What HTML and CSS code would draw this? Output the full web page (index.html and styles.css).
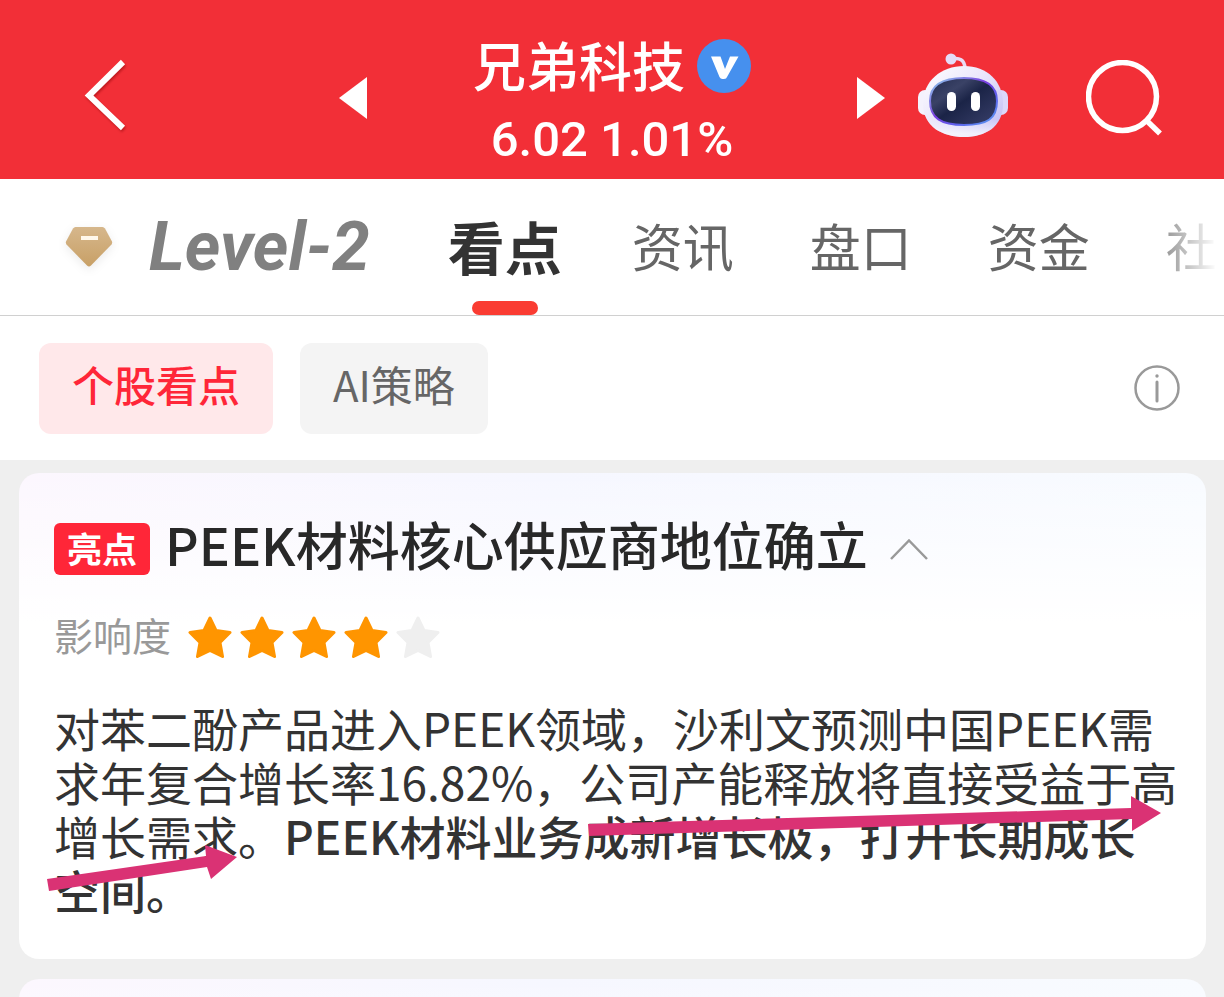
FILE: index.html
```html
<!DOCTYPE html>
<html lang="zh-CN">

<head>
    <meta charset="utf-8">
    <meta name="viewport" content="width=device-width, initial-scale=1.0">
    <title>兄弟科技</title>
    <link rel="stylesheet" href="styles.css">
</head>

<body>

    <header class="topbar">
        <div class="topbar-left">
            <button class="icon-btn back" aria-label="返回">
                <svg width="44" height="74" viewBox="0 0 44 74">
                    <path d="M39 4 L5 37.500 L39 70" fill="none" stroke="#fff" stroke-width="6" />
                </svg>
            </button>
            <button class="icon-btn" aria-label="上一只">
                <svg width="28" height="42" viewBox="0 0 28 42">
                    <path d="M0 21 L28 0 V42 Z" fill="#fff" />
                </svg>
            </button>
        </div>

        <div class="stock">
            <h1>兄弟科技
                <svg width="54" height="54" viewBox="0 0 54 54">
                    <circle cx="27" cy="27" r="27" fill="#4690ee" />
                    <path d="M14 17.500 H23.500 L28 30 L33 17.500 H41.500 L30 38 Q29.500 40 27 40 H25.500 Q23.500 40 22.500 38 Z" fill="#fff" />
                </svg>
            </h1>
            <p class="quote">6.02 1.01%</p>
        </div>

        <div class="topbar-right">
            <button class="icon-btn" aria-label="下一只">
                <svg width="28" height="42" viewBox="0 0 28 42">
                    <path d="M28 21 L0 0 V42 Z" fill="#fff" />
                </svg>
            </button>
            <button class="icon-btn robot" aria-label="AI助手">
                <svg width="92" height="86" viewBox="0 0 92 86">
                    <defs>
                        <linearGradient id="shell" x1="0" y1="0" x2="1" y2="1">
                            <stop offset="0" stop-color="#fff" />
                            <stop offset="0.45" stop-color="#eae6fb" />
                            <stop offset="1" stop-color="#bcb8f3" />
                        </linearGradient>
                        <linearGradient id="rim" x1="0" y1="0" x2="1" y2="1">
                            <stop offset="0" stop-color="#8ed5ea" />
                            <stop offset="0.45" stop-color="#7a3de0" />
                            <stop offset="0.7" stop-color="#5c62ec" />
                            <stop offset="1" stop-color="#5aa0f0" />
                        </linearGradient>
                        <linearGradient id="face" x1="0" y1="0" x2="1" y2="1">
                            <stop offset="0" stop-color="#232c50" />
                            <stop offset="0.3" stop-color="#3a4266" />
                            <stop offset="0.5" stop-color="#1b2447" />
                            <stop offset="1" stop-color="#39406b" />
                        </linearGradient>
                        <linearGradient id="chin" x1="0" y1="0" x2="0" y2="1">
                            <stop offset="0.75" stop-color="#fff" stop-opacity="0" />
                            <stop offset="0.95" stop-color="#fff" stop-opacity="0.7" />
                        </linearGradient>
                    </defs>
                    <path d="M34 6 Q47 3 48 15" fill="none" stroke="#e9dcf5" stroke-width="3.500" />
                    <circle cx="34" cy="6" r="5.500" fill="#e4dcf7" />
                    <rect x="1" y="37" width="14" height="25" rx="7" fill="#f4f2fd" />
                    <rect x="77" y="37" width="14" height="25" rx="7" fill="#dcd8fa" />
                    <path d="M47 13 C70 13 86 28 86 51 C86 74 68 84 47 84 C26 84 6 74 6 51 C6 28 24 13 47 13 Z" fill="url(#shell)" />
                    <path d="M47 13 C70 13 86 28 86 51 C86 74 68 84 47 84 C26 84 6 74 6 51 C6 28 24 13 47 13 Z" fill="url(#chin)" />
                    <path d="M47 25 C70 25 80 33 80 48 C80 66 70 72 47 72 C24 72 13 65 13 48 C13 32 25 25 47 25 Z" fill="url(#face)" stroke="url(#rim)" stroke-width="2" />
                    <rect x="30" y="39" width="9" height="19" rx="4.500" fill="#fff" />
                    <rect x="54" y="39" width="9" height="19" rx="4.500" fill="#fff" />
                </svg>
            </button>
            <button class="icon-btn" aria-label="搜索">
                <svg width="76" height="76" viewBox="0 0 76 76">
                    <circle cx="36.500" cy="36.500" r="34" fill="none" stroke="#fff" stroke-width="5.500" />
                    <path d="M60 60 L74 73.500" stroke="#fff" stroke-width="5.500" />
                </svg>
            </button>
        </div>
    </header>

    <nav class="tabs">
        <svg class="gem" width="48" height="44" viewBox="0 0 48 44">
            <defs>
                <linearGradient id="gold" x1="0" y1="0" x2="0" y2="1">
                    <stop offset="0" stop-color="#d6b78c" />
                    <stop offset="1" stop-color="#c8a066" />
                </linearGradient>
            </defs>
            <path d="M10.500 2 H37.500 Q39 2 40 3.500 L47 16.500 Q47.500 18 46.500 19.500 L26 40.500 Q24 42.500 22 40.500 L1.500 19.500 Q0.500 18 1 16.500 L8 3.500 Q9 2 10.500 2 Z" fill="url(#gold)" />
            <rect x="16" y="11" width="17" height="4" fill="#fff8ec" />
        </svg>
        <a href="#level2" class="level">Level-2</a>
        <a href="#kandian" class="active">看点</a>
        <a href="#zixun">资讯</a>
        <a href="#pankou">盘口</a>
        <a href="#zijin">资金</a>
        <a href="#she">社</a>
    </nav>

    <section class="filters">
        <button class="chip selected">个股看点</button>
        <button class="chip">AI策略</button>
        <button class="icon-btn info" aria-label="说明">
            <svg width="46" height="46" viewBox="0 0 46 46">
                <circle cx="23" cy="23" r="21.500" fill="none" stroke="#999" stroke-width="2.500" />
                <circle cx="23" cy="11" r="1.700" fill="#999" />
                <path d="M23 17 V36" stroke="#999" stroke-width="3" stroke-linecap="round" />
            </svg>
        </button>
    </section>

    <main>
        <article class="card">
            <div class="card-title">
                <span class="tag">亮点</span>
                <h2>PEEK材料核心供应商地位确立</h2>
                <button class="icon-btn" aria-label="收起">
                    <svg width="38" height="24" viewBox="0 0 38 24">
                        <path d="M1 22 L19 3.500 L37 22" fill="none" stroke="#999" stroke-width="2.500" />
                    </svg>
                </button>
            </div>

            <div class="impact">
                <span>影响度</span>
                <div class="stars" role="img" aria-label="4星">
                    <svg class="star on" viewBox="0 0 44 44"><path d="M22 3 L28 15.500 L42 17.500 L32 27.500 L34.500 41.500 L22 35.500 L9.500 41.500 L12 27.500 L2 17.500 L16 15.500 Z" /></svg>
                    <svg class="star on" viewBox="0 0 44 44"><path d="M22 3 L28 15.500 L42 17.500 L32 27.500 L34.500 41.500 L22 35.500 L9.500 41.500 L12 27.500 L2 17.500 L16 15.500 Z" /></svg>
                    <svg class="star on" viewBox="0 0 44 44"><path d="M22 3 L28 15.500 L42 17.500 L32 27.500 L34.500 41.500 L22 35.500 L9.500 41.500 L12 27.500 L2 17.500 L16 15.500 Z" /></svg>
                    <svg class="star on" viewBox="0 0 44 44"><path d="M22 3 L28 15.500 L42 17.500 L32 27.500 L34.500 41.500 L22 35.500 L9.500 41.500 L12 27.500 L2 17.500 L16 15.500 Z" /></svg>
                    <svg class="star" viewBox="0 0 44 44"><path d="M22 3 L28 15.500 L42 17.500 L32 27.500 L34.500 41.500 L22 35.500 L9.500 41.500 L12 27.500 L2 17.500 L16 15.500 Z" /></svg>
                </div>
            </div>

            <p class="card-text">对苯二酚产品进入PEEK领域，沙利文预测中国PEEK需求年复合增长率16.82%，公司产能释放将直接受益于高增长需求。<strong>PEEK材料业务成新增长极，打开长期成长空间。</strong></p>

            <!-- arrows drawn over the text -->
            <svg class="marks">
                <path d="M569 351 L1112 335 V323 L1142 340 L1113 358 V346 L570 363 Z" />
                <path d="M28 406 L187 383 L186 372 L218 384 L192 406 L188 394 L30 418 Z" />
            </svg>
        </article>

        <article class="card"></article>
    </main>

</body>

</html>
```
FILE: styles.css
```css
* {
    box-sizing: border-box;
}

body {
    margin: 0;
    height: 100vh;
    overflow: hidden;
    background-color: #efefef;
    font-family: "Noto Sans CJK SC", sans-serif;
    color: #333;
}

h1,
h2,
p {
    margin: 0;
}

svg {
    display: block;
    flex: none;
}

button {
    border: 0;
    font-family: inherit;
    cursor: pointer;
}

.icon-btn {
    padding: 0;
    background: none;
}

/* top bar */

.topbar {
    display: grid;
    grid-template-columns: 1fr 40% 1fr;
    height: 179px;
    background-color: #f22f37;
    color: white;
}

.topbar-left,
.topbar-right {
    display: flex;
    align-items: center;
    padding-top: 16px;
}

.topbar-left {
    justify-content: space-between;
    padding-left: 84px;
}

.back {
    margin-bottom: 6px;
    filter: drop-shadow(1px 2px 1px rgba(120, 0, 0, .4));
}

.topbar-right .robot {
    margin: 0 77px 4px 32px;
}

.stock {
    padding-top: 28px;
    text-align: center;
}

.stock h1 {
    display: flex;
    align-items: center;
    justify-content: center;
    gap: 12px;
    font-size: 53px;
    font-weight: 500;
    line-height: 72px;
}

.stock svg {
    margin-top: 4px;
}

.quote {
    font-family: Roboto, sans-serif;
    font-size: 49px;
    font-weight: 500;
    line-height: 80px;
}

/* tabs */

.tabs {
    display: flex;
    align-items: center;
    gap: 76px;
    height: 137px;
    padding-left: 65px;
    border-bottom: 1px solid #d0d0d0;
    background-color: white;
    overflow: hidden;
    white-space: nowrap;
}

.tabs a {
    flex: none;
    padding-bottom: 4px;
    color: #666;
    font-size: 51px;
    line-height: 132px;
    text-decoration: none;
}

.tabs .gem {
    margin-right: -40px;
    filter: drop-shadow(0 3px 5px rgba(0, 0, 0, .08));
}

.tabs .level {
    margin-right: 8px;
    padding-bottom: 0;
    color: #808080;
    font-family: Roboto, sans-serif;
    font-size: 68px;
    font-style: italic;
    font-weight: 700;
}

.tabs .active {
    position: relative;
    margin: 0 -6px;
    color: #333;
    font-size: 57px;
    font-weight: 700;
}

.tabs .active::after {
    content: "";
    position: absolute;
    left: 50%;
    bottom: 0;
    width: 66px;
    height: 14px;
    margin-left: -33px;
    border-radius: 7px;
    background-color: #fa3c32;
}

.tabs a:last-child {
    color: transparent;
    background: linear-gradient(to right, #999, white);
    background-clip: text;
    -webkit-background-clip: text;
}

/* filter chips */

.filters {
    display: flex;
    align-items: center;
    gap: 27px;
    height: 144px;
    padding: 0 44px 0 39px;
    background-color: white;
}

.chip {
    height: 91px;
    padding: 0 33px 10px;
    border-radius: 12px;
    background-color: #f4f4f4;
    color: #666;
    font-size: 42px;
}

.chip.selected {
    background-color: #ffe8ea;
    color: #ff2638;
    font-weight: 500;
}

.info {
    margin-left: auto;
}

/* cards */

main {
    display: grid;
    gap: 20px;
    padding: 13px 18px 0 19px;
}

.card {
    position: relative;
    min-height: 200px;
    padding: 38px 26px 43px 35px;
    border-radius: 20px;
    background: linear-gradient(to bottom, rgba(255, 255, 255, 0), white 150px), linear-gradient(to right, #fcf7fe, #f6f7ff 45%, #f8fbff);
}

.card-title {
    display: flex;
    align-items: center;
    height: 76px;
}

.tag {
    padding: 0 13px 2px;
    border-radius: 6px;
    background-color: #ff2638;
    color: white;
    font-size: 35px;
    font-weight: 700;
    line-height: 50px;
}

.card-title h2 {
    margin: 0 22px 10px 15px;
    color: #282828;
    font-size: 52px;
    font-weight: 500;
    line-height: 66px;
}

.impact {
    display: flex;
    align-items: center;
    gap: 17px;
    height: 100px;
    color: #999;
    font-size: 39px;
}

.impact span {
    padding-bottom: 6px;
}

.stars {
    display: flex;
    gap: 8px;
}

.star {
    width: 44px;
    height: 44px;
    fill: #efefef;
    stroke: #efefef;
    stroke-width: 3;
    stroke-linejoin: round;
}

.star.on {
    fill: #ff9500;
    stroke: #ff9500;
}

.card-text {
    padding-top: 13px;
    font-size: 46px;
    line-height: 54px;
}

.card-text strong {
    font-weight: 500;
}

.marks {
    position: absolute;
    top: 0;
    left: 0;
    width: 100%;
    height: 100%;
    fill: #da3274;
    pointer-events: none;
}
```
